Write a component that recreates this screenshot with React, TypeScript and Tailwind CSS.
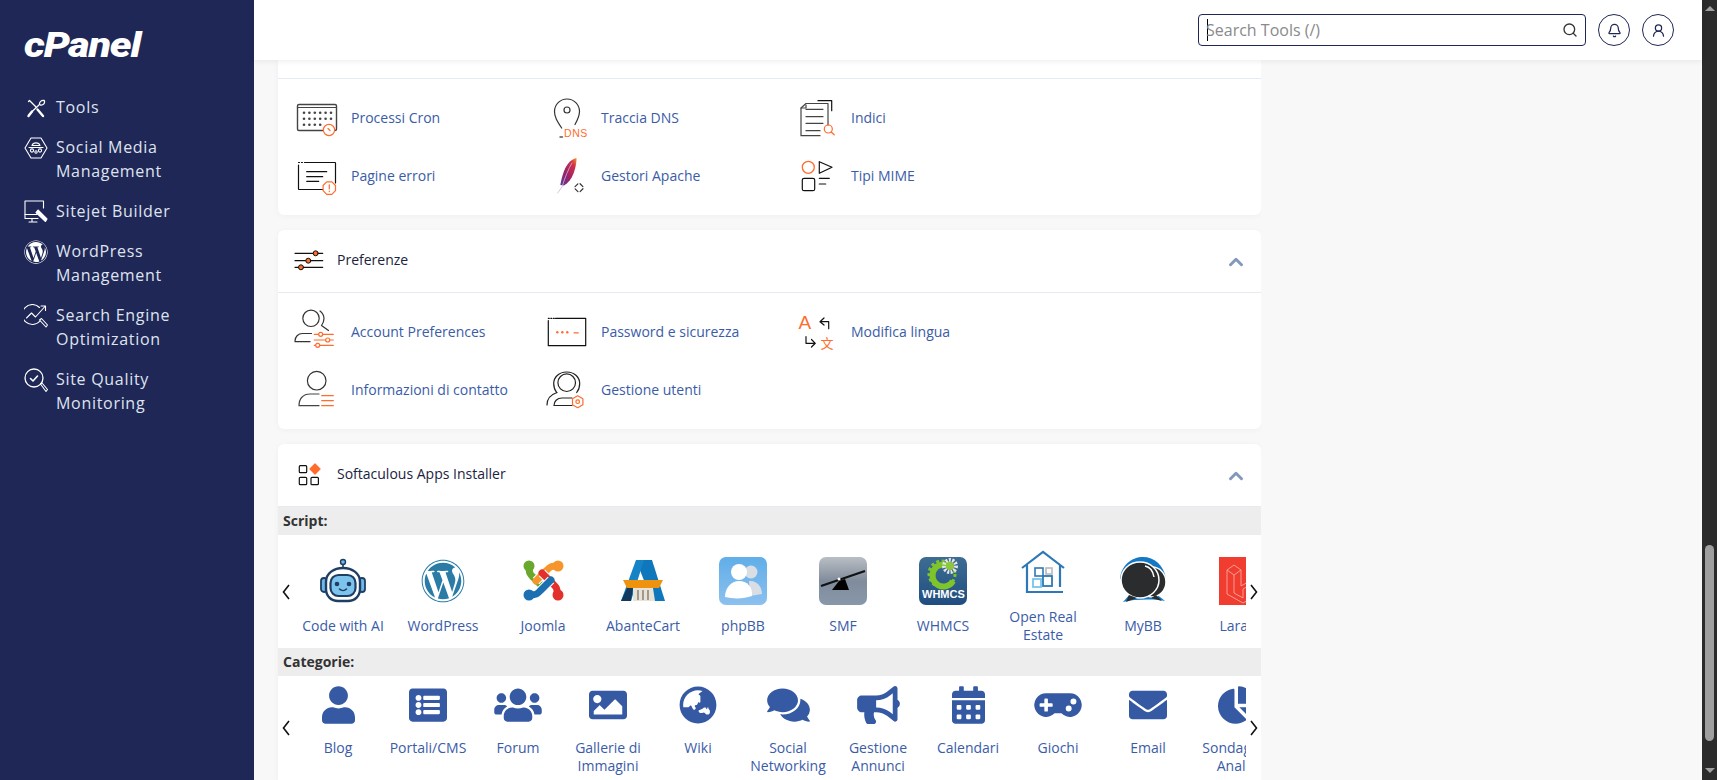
import type { ReactNode } from 'react'
import { Bell, ChevronUp, Search, UserRound } from 'lucide-react'
import {
  FaBullhorn,
  FaCalendarAlt,
  FaChartPie,
  FaComments,
  FaEnvelope,
  FaGamepad,
  FaGlobeAsia,
  FaImage,
  FaListAlt,
  FaUser,
  FaUsers,
  FaWordpress,
} from 'react-icons/fa'

const ORANGE = '#ff6c2c'
const INK = '#222222'

function Glyph({ children, size = 48 }: { children: ReactNode; size?: number }) {
  return (
    <svg viewBox={`0 0 ${size} ${size}`} width={size} height={size} fill="none" stroke={INK} strokeWidth="1.2" strokeLinecap="round" strokeLinejoin="round" className="shrink-0">
      {children}
    </svg>
  )
}

/* sidebar icons */
function SideIcon({ children }: { children: ReactNode }) {
  return (
    <svg viewBox="0 0 24 24" width={24} height={24} fill="none" stroke="#ffffff" strokeWidth="1.1" strokeLinecap="round" strokeLinejoin="round" className="shrink-0 translate-y-px">
      {children}
    </svg>
  )
}

const ToolsIcon = (
  <SideIcon>
    <path d="M4.5 5.5l1-1 6.5 6.500" strokeWidth="1.3" />
    <path d="M13.5 13.5l5.5 6.5" strokeWidth="2.4" />
    <path d="M20 4.5c-2.500-.5-5 1.500-4.500 4L5 18.5" strokeWidth="1.3" />
    <path d="M20.5 5c.5 2.500-1.500 4.500-4 4" strokeWidth="1.3" />
    <path d="M8 15.5L4.5 20" strokeWidth="2.4" />
  </SideIcon>
)
const SocialIcon = (
  <SideIcon>
    <path d="M7 2h10l6 10-6 10H7L1 12z" />
    <path d="M8 9.5C9 6 15 6 16 9.5zM5 11.5h14" />
    <circle cx="8" cy="14.5" r="1.6" />
    <circle cx="16" cy="14.5" r="1.6" />
    <circle cx="12" cy="16" r="1.2" />
  </SideIcon>
)
const SitejetIcon = (
  <SideIcon>
    <path d="M19.5 8V1H1v17.5h13" />
    <path d="M1 14.5h12M5 22h8M8 18.5V22" />
    <path d="M14 10l9 9-1.5 2.5-9.5-9z" fill="#ffffff" />
  </SideIcon>
)
const SeoIcon = (
  <SideIcon>
    <path d="M15.5 3.5A10 10 0 1 0 16 17" />
    <path d="M2.5 14l5-5 4 4 9-10M17 2h4.5v4.5" />
    <path d="M15.5 16l2-1.5 6 6.5-1.5 2z" />
  </SideIcon>
)
const QualityIcon = (
  <SideIcon>
    <circle cx="10" cy="10" r="9" strokeWidth="1.3" />
    <path d="M6.5 10.5l2.5 2.5 4.5-5" strokeWidth="1.6" />
    <path d="M16.5 16l1.5-1 5.5 6.5-1.5 2z" />
  </SideIcon>
)

const sideItems: { icon: ReactNode; label: ReactNode }[] = [
  { icon: ToolsIcon, label: 'Tools' },
  { icon: SocialIcon, label: <>Social Media<br />Management</> },
  { icon: SitejetIcon, label: 'Sitejet Builder' },
  { icon: <FaWordpress size={24} className="shrink-0 translate-y-px text-white" />, label: <>WordPress<br />Management</> },
  { icon: SeoIcon, label: <>Search Engine<br />Optimization</> },
  { icon: QualityIcon, label: <>Site Quality<br />Monitoring</> },
]

/* tool icons */
const cronDots = [
  [11, 18.7], [16.4, 18.7], [21.8, 18.7], [27.2, 18.7], [32.6, 18.7], [38, 18.7],
  [11, 24.7], [16.4, 24.7], [21.8, 24.7], [27.2, 24.7], [32.6, 24.7], [38, 24.7],
  [11, 30.7], [16.4, 30.7], [21.8, 30.7], [27.2, 30.7],
]

const CronIcon = (
  <Glyph>
    <rect x="4.5" y="10.5" width="39" height="26" rx="1.5" stroke="#444" strokeWidth="1.4" />
    <path d="M4.5 13.5h39" stroke="#444" />
    {cronDots.map(([x, y]) => <circle key={`${x}-${y}`} cx={x} cy={y} r="1.3" fill="#444" stroke="none" />)}
    <circle cx="36" cy="36" r="5.6" fill="#fff" stroke={ORANGE} />
    <path d="M35 34.5l2 2" stroke={ORANGE} />
  </Glyph>
)
const DnsIcon = (
  <Glyph>
    <path d="M18.7 34C14 27 11.5 23 11.5 17.5a12.500 12.500 0 0 1 25 0c0 4-1.700 8-4.500 13" stroke="#333" />
    <circle cx="24" cy="16" r="3" stroke="#333" />
    <path d="M17 43h2.500" stroke="#555" strokeWidth="1.4" />
    <text x="21" y="42.5" fontSize="10.5" letterSpacing="0.6" fill={ORANGE} stroke="none" fontFamily="Liberation Sans">DNS</text>
  </Glyph>
)
const IndexIcon = (
  <Glyph>
    <path d="M25 6.7h13.7v10" stroke="#111" />
    <path d="M35 31V9.5H13L8 14v27.7h19" stroke="#444" />
    <path d="M13 15.3h17M13 22.7h17M13 29.3h17M13 36.7h14M8 14h5v-3" stroke="#444" />
    <circle cx="35.3" cy="35" r="4" stroke={ORANGE} />
    <path d="M38.2 38l3 2.8" stroke={ORANGE} />
  </Glyph>
)
const ErrorIcon = (
  <Glyph>
    <path d="M5.5 10.5h1M8.5 10.5h1M11.5 10.5h30.5a.5.5 0 0 1 .5.5v20M30 37.5H6a.5.5 0 0 1-.5-.5V13" stroke="#111" />
    <path d="M13.7 19.7h20M13.7 24.7h16M13.7 29.3h12" stroke="#111" />
    <path d="M33.7 30.2h5.2l3.6 3.6v5.2l-3.6 3.6h-5.2l-3.6-3.6v-5.2z" transform="translate(0 -.3)" fill="#fff" stroke={ORANGE} />
    <path d="M36.3 32.8v4.2M36.3 39.2v.4" stroke={ORANGE} />
  </Glyph>
)
const ApacheIcon = (
  <Glyph>
    <defs>
      <linearGradient id="feather" x1="1" y1="0" x2="0" y2="1">
        <stop offset="0" stopColor="#f69923" />
        <stop offset="0.22" stopColor="#d2304a" />
        <stop offset="0.6" stopColor="#9b2064" />
        <stop offset="1" stopColor="#5b3a9b" />
      </linearGradient>
    </defs>
    <path d="M33.5 6c-6.500 1.500-11 8-13.500 16-1.200 4-2 7-2.700 11l3.700.5c4.500-2.500 7.500-7 9.500-12 1.500-4 3.200-10.500 3-15.500z" fill="url(#feather)" stroke="none" />
    <path d="M29 11c-3.500 6-7 14-10 24l-4.300 6" stroke="#c9b8e0" strokeWidth=".8" />
    <path d="M36 30.7l5 5-5 5-5-5z" stroke="#333" strokeDasharray="4 3.07" strokeDashoffset="-1.5" strokeWidth="1.2" />
  </Glyph>
)
const MimeIcon = (
  <Glyph>
    <circle cx="15.3" cy="15.3" r="6" stroke={ORANGE} strokeWidth="1.3" />
    <path d="M26.3 9.7L39 15.3 26.3 21.3z" stroke="#111" />
    <rect x="9.3" y="26.3" width="12.4" height="12.4" rx="1.8" stroke="#111" />
    <path d="M26.3 26.3h10M26.3 32h6.4" stroke="#111" />
  </Glyph>
)
const AccountIcon = (
  <Glyph>
    <circle cx="18" cy="10.3" r="8.2" stroke="#333" />
    <path d="M27 3c2.500 2 4 4.500 4 7.500 0 3-1 5-2.500 7l7 5" stroke="#333" />
    <path d="M2 33c0-4 3-7.500 7.500-7.500h9M2 33.7h15" stroke="#333" />
    <path d="M21.3 26.3h19M21.3 32h19M21.3 37.3h19" stroke={ORANGE} />
    <circle cx="27.7" cy="26.3" r="2" fill="#fff" stroke={ORANGE} />
    <circle cx="34.7" cy="32" r="2" fill="#fff" stroke={ORANGE} />
    <circle cx="24.7" cy="37.3" r="2" fill="#fff" stroke={ORANGE} />
  </Glyph>
)
const PasswordIcon = (
  <Glyph>
    <path d="M5.3 10.3h1M7.8 10.3h1M10.3 10.3h1M12.5 10.3h30.2v27.4H5.3V12.5" stroke="#111" />
    <circle cx="14.3" cy="24.3" r="1.2" fill={ORANGE} stroke="none" />
    <circle cx="19.3" cy="24.3" r="1.2" fill={ORANGE} stroke="none" />
    <circle cx="24.3" cy="24.3" r="1.2" fill={ORANGE} stroke="none" />
    <path d="M31 24.8h4.3" stroke={ORANGE} />
  </Glyph>
)
const LanguageIcon = (
  <Glyph>
    <text x="5.5" y="21" fontSize="19" fill={ORANGE} stroke="none" fontFamily="Liberation Sans">A</text>
    <path d="M35.7 20.7v-7H27M31 10l-4 3.700 4 3.300" stroke="#111" />
    <path d="M13 28.7v6.6h9.3M18.5 31.5l3.800 3.800-3.800 3.700" stroke="#111" />
    <text x="27.5" y="40" fontSize="13" fill={ORANGE} stroke="none" fontFamily="Noto Sans CJK SC">文</text>
  </Glyph>
)
const ContactIcon = (
  <Glyph>
    <circle cx="23.7" cy="14.7" r="9.3" stroke="#333" />
    <path d="M6 39.7c0-7 4-11.700 11-11.700h9M6 39.7h20" stroke="#444" />
    <path d="M28.7 29.7h11.6M28.7 34.7h11.6M28.7 39.7h11.6" stroke={ORANGE} />
  </Glyph>
)
const UsersIcon = (
  <Glyph>
    <circle cx="23.7" cy="16.7" r="8.8" stroke="#222" />
    <path d="M13.7 26.5c-2-2.500-3-5.500-3-9 0-6 5-11.500 13-11.500s13 5.500 13 11.500c0 3.500-1 6.500-3 9" stroke="#222" />
    <path d="M4 39c0-6 4-10.500 10-12.500M29 39.5H11c0-4 3-7.500 8-7.500h10" stroke="#222" />
    <path d="M34.7 29.7l5.2 3v6l-5.200 3-5.200-3v-6z" fill="#fff" stroke={ORANGE} />
    <circle cx="34.7" cy="35.7" r="1.8" stroke={ORANGE} />
  </Glyph>
)

const cronItems = [
  { icon: CronIcon, label: 'Processi Cron' },
  { icon: DnsIcon, label: 'Traccia DNS' },
  { icon: IndexIcon, label: 'Indici' },
  { icon: ErrorIcon, label: 'Pagine errori' },
  { icon: ApacheIcon, label: 'Gestori Apache' },
  { icon: MimeIcon, label: 'Tipi MIME' },
]

const prefItems = [
  { icon: AccountIcon, label: 'Account Preferences' },
  { icon: PasswordIcon, label: 'Password e sicurezza' },
  { icon: LanguageIcon, label: 'Modifica lingua' },
  { icon: ContactIcon, label: 'Informazioni di contatto' },
  { icon: UsersIcon, label: 'Gestione utenti' },
]

/* app logos */
const RobotLogo = (
  <svg viewBox="0 0 48 48" width={48} height={48} className="shrink-0">
    <path d="M24 6v6" stroke="#1e3f63" strokeWidth="1.6" />
    <circle cx="24" cy="5" r="2.5" fill="#6fb8e8" stroke="#1e3f63" strokeWidth="1.4" />
    <rect x="2" y="21" width="6" height="14" rx="3" fill="#6fb8e8" stroke="#1e3f63" strokeWidth="1.8" />
    <rect x="40" y="21" width="6" height="14" rx="3" fill="#6fb8e8" stroke="#1e3f63" strokeWidth="1.8" />
    <path d="M7 25c0-9 8-14 17-14s17 5 17 14v7c0 7-5 12-12 12H19c-7 0-12-5-12-12z" fill="#fff" stroke="#1e3f63" strokeWidth="2.4" />
    <rect x="11.5" y="18" width="25" height="21" rx="8" fill="#7cc3ee" stroke="#1e3f63" strokeWidth="2.2" />
    <circle cx="18" cy="27" r="2.3" fill="#1e3f63" />
    <circle cx="30" cy="27" r="2.3" fill="#1e3f63" />
    <path d="M20.5 32c2 2 5 2 7 0" stroke="#1e3f63" strokeWidth="1.6" fill="none" strokeLinecap="round" />
  </svg>
)
const WpLogo = (
  <div className="w-12 h-12 flex items-center justify-center">
    <FaWordpress size={44} className="text-[#2a7ba5]" />
  </div>
)

function JoomlaBand({ d, color }: { d: string; color: string }) {
  return (
    <>
      <path d={d} stroke="#fff" strokeWidth="9" strokeLinecap="butt" />
      <path d={d} stroke={color} strokeWidth="7" />
    </>
  )
}

const JoomlaLogo = (
  <svg viewBox="0 0 48 48" width={48} height={48} fill="none" strokeLinecap="round" className="shrink-0">
    <JoomlaBand d="M11 10C9 16 12 18 15 21L25 31" color="#6aa82d" />
    <JoomlaBand d="M38 10C32 8 30 11 27 14L17 24" color="#f7952d" />
    <JoomlaBand d="M38 37C39 31 36 29 33 26L23 16" color="#e2302c" />
    <JoomlaBand d="M11 37C17 39 19 36 22 33L32 23" color="#1c6fb0" />
    <circle cx="10" cy="9" r="5.5" fill="#6aa82d" />
    <circle cx="39" cy="9" r="5.5" fill="#f7952d" />
    <circle cx="39" cy="38" r="5.5" fill="#e2302c" />
    <circle cx="10" cy="38" r="5.5" fill="#1c6fb0" />
  </svg>
)
const AbanteLogo = (
  <svg viewBox="0 0 48 48" width={48} height={48} className="shrink-0">
    <polygon points="17,3 33,3 46,44 33,44" fill="#0f77bc" />
    <polygon points="17,3 25,3 12,44 2,44" fill="#1583c6" />
    <polygon points="4,23 44,23 40,31 8,31" fill="#ef930f" />
    <polygon points="2,44 8,31 14,31 12,44" fill="#123a5e" />
    <polygon points="14,31 34,31 36,44 14,44" fill="#e8e3d6" />
    <path d="M19 33v10M24 33v10M29 33v10" stroke="#7b7466" strokeWidth="1.3" />
  </svg>
)
const PhpbbLogo = (
  <svg viewBox="0 0 48 48" width={48} height={48} className="shrink-0">
    <defs>
      <linearGradient id="phpbb" x1="0" y1="0" x2="0" y2="1">
        <stop offset="0" stopColor="#60aee8" />
        <stop offset="1" stopColor="#8cc0ef" />
      </linearGradient>
    </defs>
    <rect width="48" height="48" rx="7" fill="url(#phpbb)" />
    <circle cx="32" cy="15" r="6.5" fill="#d9dee4" />
    <path d="M30 24c8-1 13 6 13 13l-12 2z" fill="#d9dee4" />
    <circle cx="20" cy="15" r="8" fill="#fff" />
    <path d="M6 40c0-9 6-16 14-16s14 6 13 15c-8 3-19 3-27 1z" fill="#fff" />
  </svg>
)
const SmfLogo = (
  <svg viewBox="0 0 48 48" width={48} height={48} className="shrink-0">
    <defs>
      <linearGradient id="smf" x1="0" y1="0" x2="0" y2="1">
        <stop offset="0" stopColor="#b9bec4" />
        <stop offset="0.5" stopColor="#808c9c" />
        <stop offset="1" stopColor="#8897aa" />
      </linearGradient>
    </defs>
    <rect width="48" height="48" rx="7" fill="url(#smf)" />
    <path d="M2 29l44-15" stroke="#111" strokeWidth="2.2" />
    <polygon points="20,24 26,22 30,33 13,33" fill="#000" />
    <circle cx="20" cy="22" r="1.5" fill="#fff" />
  </svg>
)
const WhmcsLogo = (
  <svg viewBox="0 0 48 48" width={48} height={48} className="shrink-0">
    <defs>
      <linearGradient id="whmcs" x1="0" y1="0" x2="0" y2="1">
        <stop offset="0" stopColor="#3d6d93" />
        <stop offset="1" stopColor="#204d80" />
      </linearGradient>
    </defs>
    <rect width="48" height="48" rx="7" fill="url(#whmcs)" />
    <circle cx="23" cy="17" r="13" fill="none" stroke="#7ec52c" strokeWidth="3" strokeDasharray="3 2.5" />
    <path d="M34 24a11 11 0 1 1-4-15" fill="none" stroke="#7ec52c" strokeWidth="6" />
    <circle cx="31" cy="9" r="6" fill="none" stroke="#e4e4e4" strokeWidth="4" strokeDasharray="2 1.3" />
    <circle cx="31" cy="9" r="4" fill="#8fc63e" />
    <text x="3" y="41" fontSize="11" fill="#fff" fontFamily="Liberation Sans" fontWeight="700">WHMCS</text>
  </svg>
)
const EstateLogo = (
  <svg viewBox="0 0 48 48" width={48} height={48} fill="none" className="shrink-0">
    <path d="M3 20L24 4l21 16M8 17v27h36M41 17v22" stroke="#2d78b6" strokeWidth="2.2" />
    <rect x="16" y="20" width="8" height="8" stroke="#2d78b6" strokeWidth="1.6" />
    <rect x="27" y="20" width="6" height="6" stroke="#b9b9b9" strokeWidth="1.6" />
    <rect x="14" y="31" width="8" height="8" stroke="#76c4ef" strokeWidth="1.8" />
    <rect x="24" y="28" width="9" height="10" stroke="#2d78b6" strokeWidth="1.8" />
  </svg>
)
const MybbLogo = (
  <svg viewBox="0 0 48 48" width={48} height={48} className="shrink-0">
    <path d="M1 22C2 8 13 0 24 0s21 8 23 22z" fill="#1478c4" />
    <path d="M12 36c4 3 16 3 24 0l10 8c-10-2-30-2-42 1z" fill="#1478c4" />
    <ellipse cx="33" cy="25" rx="14" ry="15" fill="#2a2c2e" stroke="#fff" strokeWidth="1.5" />
    <ellipse cx="21" cy="23" rx="19" ry="18" fill="#2a2c2e" stroke="#fff" strokeWidth="1.5" />
    <path d="M10 38l-3 7 11-4z" fill="#2a2c2e" />
    <path d="M37 38l6 6-11-3z" fill="#2a2c2e" />
    <path d="M26 9c5 1 8 5 9 11" stroke="#fff" strokeWidth="1.5" fill="none" />
  </svg>
)
const LaravelLogo = (
  <svg viewBox="0 0 48 48" width={48} height={48} fill="none" stroke="#f9a69d" strokeWidth="0.9" className="shrink-0">
    <rect width="48" height="48" fill="#f03d30" stroke="none" />
    <path d="M8 13l7-5 7 5v16l9-5 8 5v9l-15 8-16-9zM15 18l7-5M15 18L8 13M15 18v18l9 5M24 41v-9l15-8" />
  </svg>
)

const scripts: { logo: ReactNode; label: string }[] = [
  { logo: RobotLogo, label: 'Code with AI' },
  { logo: WpLogo, label: 'WordPress' },
  { logo: JoomlaLogo, label: 'Joomla' },
  { logo: AbanteLogo, label: 'AbanteCart' },
  { logo: PhpbbLogo, label: 'phpBB' },
  { logo: SmfLogo, label: 'SMF' },
  { logo: WhmcsLogo, label: 'WHMCS' },
  { logo: EstateLogo, label: 'Open Real Estate' },
  { logo: MybbLogo, label: 'MyBB' },
  { logo: LaravelLogo, label: 'Laravel' },
]

const categories: { icon: ReactNode; label: string }[] = [
  { icon: <FaUser className="w-[33px] h-[38px]" />, label: 'Blog' },
  { icon: <FaListAlt className="w-[38px] h-[38px]" />, label: 'Portali/CMS' },
  { icon: <FaUsers className="w-[48px] h-[38px]" />, label: 'Forum' },
  { icon: <FaImage className="w-[38px] h-[38px]" />, label: 'Gallerie di Immagini' },
  { icon: <FaGlobeAsia className="w-[38px] h-[38px]" />, label: 'Wiki' },
  { icon: <FaComments className="w-[43px] h-[38px]" />, label: 'Social Networking' },
  { icon: <FaBullhorn className="w-[43px] h-[38px]" />, label: 'Gestione Annunci' },
  { icon: <FaCalendarAlt className="w-[33px] h-[38px]" />, label: 'Calendari' },
  { icon: <FaGamepad className="w-[48px] h-[38px]" />, label: 'Giochi' },
  { icon: <FaEnvelope className="w-[38px] h-[38px]" />, label: 'Email' },
  { icon: <FaChartPie className="w-[40px] h-[38px]" />, label: 'Sondaggi e Analisi' },
]

function ToolGrid({ items }: { items: { icon: ReactNode; label: string }[] }) {
  return (
    <div className="grid grid-cols-[repeat(3,250px)] pl-[15px] pt-[10px] pb-[10px]">
      {items.map((item) => (
        <div key={item.label} className="flex items-center gap-[10px] h-[58px]">
          {item.icon}
          <span className="text-sm text-[#3a5ca8]">{item.label}</span>
        </div>
      ))}
    </div>
  )
}

function CardHeader({ icon, title }: { icon: ReactNode; title: string }) {
  return (
    <div className="flex items-center h-[63px] pl-[15px] pr-[14px] pb-[2px] border-b border-[#e4ebf2]">
      {icon}
      <span className="ml-3 text-sm text-[#1c2340]">{title}</span>
      <ChevronUp size={22} strokeWidth={3.2} className="ml-auto translate-y-[2px] text-[#8399bb]" />
    </div>
  )
}

function Arrow({ side }: { side: 'left' | 'right' }) {
  const place = side === 'left' ? 'left-[4px]' : 'right-[3px]'
  return (
    <svg viewBox="0 0 8 16" width={8} height={16} fill="none" stroke="#111" strokeWidth="1.6" className={`absolute top-1/2 -translate-y-1/2 ${place}`}>
      <path d={side === 'left' ? 'M7 1L1.500 8 7 15' : 'M1 1l5.500 7L1 15'} />
    </svg>
  )
}

function Band({ title }: { title: string }) {
  return <div className="h-[28px] pl-[5px] flex items-center bg-[#ededed] text-sm font-bold text-[#333333]">{title}</div>
}

export default function App() {
  return (
    <div className="flex h-screen w-full overflow-hidden bg-[#f8f8f8] font-['Open_Sans',sans-serif]">
      <aside className="w-[254px] shrink-0 bg-[#1f2756] pl-6">
        <div className="h-[95px] pt-[28px]">
          <span className="inline-block origin-left scale-x-[1.18] font-['Roboto',sans-serif] font-black italic text-[35px] leading-[35px] tracking-[-1px] text-white">
            cPanel
          </span>
        </div>
        <nav className="flex flex-col gap-4">
          {sideItems.map((item, i) => (
            <div key={i} className="flex gap-2 text-base leading-6 tracking-[0.7px] text-[#dfe3ef]">
              {item.icon}
              <span>{item.label}</span>
            </div>
          ))}
        </nav>
      </aside>

      <main className="flex-1 flex flex-col min-w-0">
        <header className="relative z-10 h-[60px] shrink-0 bg-white shadow-[0_1px_6px_rgba(0,0,0,0.08)] flex items-center justify-end gap-3 pr-[28px]">
          <div className="w-[388px] h-8 border border-[#1f2756] rounded flex items-center pl-[8px] pr-[7px]">
            <span className="w-px h-[22px] bg-black" />
            <span className="flex-1 text-base text-[#8a8a8a] -ml-[2px]">Search Tools (/)</span>
            <Search size={16} className="text-[#333]" />
          </div>
          <div className="w-8 h-8 rounded-full border border-[#1f2756] flex items-center justify-center">
            <Bell size={15} className="text-[#1f2756]" />
          </div>
          <div className="w-8 h-8 rounded-full border border-[#1f2756] flex items-center justify-center">
            <UserRound size={15} className="text-[#1f2756]" />
          </div>
        </header>

        <div className="flex-1 overflow-hidden pl-6 w-[1007px] flex flex-col gap-[15px]">
          <section className="bg-white rounded-b-md shadow-[0_1px_6px_rgba(0,0,0,0.04)]">
            <div className="h-[19px] border-b border-[#e4ebf2]" />
            <ToolGrid items={cronItems} />
          </section>

          <section className="bg-white rounded-md shadow-[0_1px_6px_rgba(0,0,0,0.04)]">
            <CardHeader
              title="Preferenze"
              icon={
                <Glyph size={32}>
                  <path d="M2 9.3h27.7M2 16.7h27.7M2 23.3h27.7" stroke="#111" />
                  <circle cx="22.7" cy="9.3" r="2.5" fill={ORANGE} stroke="#111" strokeWidth="1" />
                  <circle cx="15.3" cy="16.7" r="2.5" fill={ORANGE} stroke="#111" strokeWidth="1" />
                  <circle cx="8" cy="23.3" r="2.5" fill={ORANGE} stroke="#111" strokeWidth="1" />
                </Glyph>
              }
            />
            <ToolGrid items={prefItems} />
          </section>

          <section className="flex-1 bg-white rounded-t-md shadow-[0_1px_6px_rgba(0,0,0,0.04)] overflow-hidden">
            <CardHeader
              title="Softaculous Apps Installer"
              icon={
                <Glyph size={32}>
                  <rect x="6.3" y="7.7" width="7.4" height="7" rx="1" stroke="#111" />
                  <rect x="6.3" y="19.3" width="7.4" height="7.4" rx="1" stroke="#111" />
                  <rect x="18" y="19.3" width="7.4" height="7.4" rx="1" stroke="#111" />
                  <path d="M22 6l5 5-5 5-5-5z" fill={ORANGE} stroke={ORANGE} />
                </Glyph>
              }
            />
            <Band title="Script:" />
            <div className="relative h-[113px] pt-2 flex items-center">
              <Arrow side="left" />
              <div className="mx-[15px] overflow-hidden flex items-center w-full">
                {scripts.map((app) => (
                  <div key={app.label} className="w-[100px] shrink-0 flex flex-col items-center">
                    {app.logo}
                    <span className="mt-3 text-sm leading-[18px] text-center text-[#3a5ca8]">{app.label}</span>
                  </div>
                ))}
              </div>
              <Arrow side="right" />
            </div>
            <Band title="Categorie:" />
            <div className="relative h-[104px] pt-[10px]">
              <Arrow side="left" />
              <div className="mx-[15px] overflow-hidden flex items-start">
                {categories.map((cat) => (
                  <div key={cat.label} className="w-[90px] shrink-0 flex flex-col items-center text-[#3559a3]">
                    <div className="h-[38px] flex items-center">{cat.icon}</div>
                    <span className="mt-[15px] text-sm leading-[18px] text-center text-[#3a5ca8]">{cat.label}</span>
                  </div>
                ))}
              </div>
              <Arrow side="right" />
            </div>
          </section>
        </div>
      </main>

      <div className="w-[15px] shrink-0 bg-[#2b2b2b] flex flex-col items-center">
        <div className="mt-[6px] w-0 h-0 border-x-[5px] border-x-transparent border-b-[5px] border-b-[#a0a0a0]" />
        <div className="mt-[534px] w-[9px] h-[196px] rounded-[5px] bg-[#9f9f9f]" />
        <div className="mt-[27px] w-0 h-0 border-x-[5px] border-x-transparent border-t-[5px] border-t-[#a0a0a0]" />
      </div>
    </div>
  )
}
